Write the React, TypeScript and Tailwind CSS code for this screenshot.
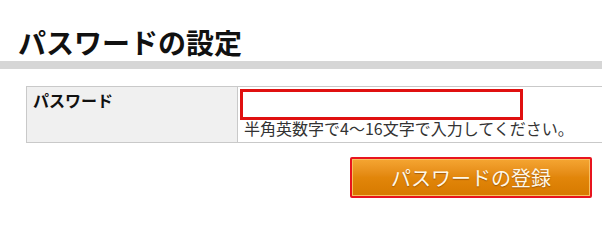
export default function App() {
  return (
    <div className="w-[602px] h-[209px] overflow-hidden bg-white font-['Noto_Sans_CJK_JP',sans-serif] text-[#222]">
      {/* Heading */}
      <h2 className="pl-[18px] pt-[26px] text-[28px] font-bold leading-[32px] text-[#111]">パスワードの設定</h2>
      <div className="mt-[3px] h-[8px] w-full bg-[#d6d6d6]" />

      {/* Form table */}
      <div className="mt-[17px] ml-[26px] w-[620px] border-y border-l border-[#c9c9c9] flex h-[57px]">
        <div className="w-[211px] shrink-0 bg-[#f0f0f0] border-r border-[#c9c9c9] pl-[6px] pt-[3px] text-[16px] font-bold leading-[20px] text-[#111]">
          パスワード
        </div>
        <div className="flex-1 pl-[2px] pt-[2px]">
          <input
            type="password"
            className="block w-[283px] h-[31px] border-[3px] border-[#e01010] bg-white outline-none"
          />
          <p className="-mt-[2px] pl-[4px] text-[16px] leading-[20px] text-[#333]">
            半角英数字で4〜16文字で入力してください。
          </p>
        </div>
      </div>

      {/* Submit */}
      <div className="flex justify-end pr-[10px] mt-[14px]">
        <button className="w-[242px] h-[41px] border-2 border-[#e8141e] rounded-[2px] p-0 bg-[#e8141e]">
          <span className="flex h-full w-full items-center justify-center border border-[#f8c060] bg-gradient-to-b from-[#f4a430] via-[#e2860a] to-[#d77a00] text-[20px] leading-none text-[#fff8e8] [text-shadow:0_1px_1px_rgba(120,60,0,0.6)]">
            パスワードの登録
          </span>
        </button>
      </div>
    </div>
  );
}
